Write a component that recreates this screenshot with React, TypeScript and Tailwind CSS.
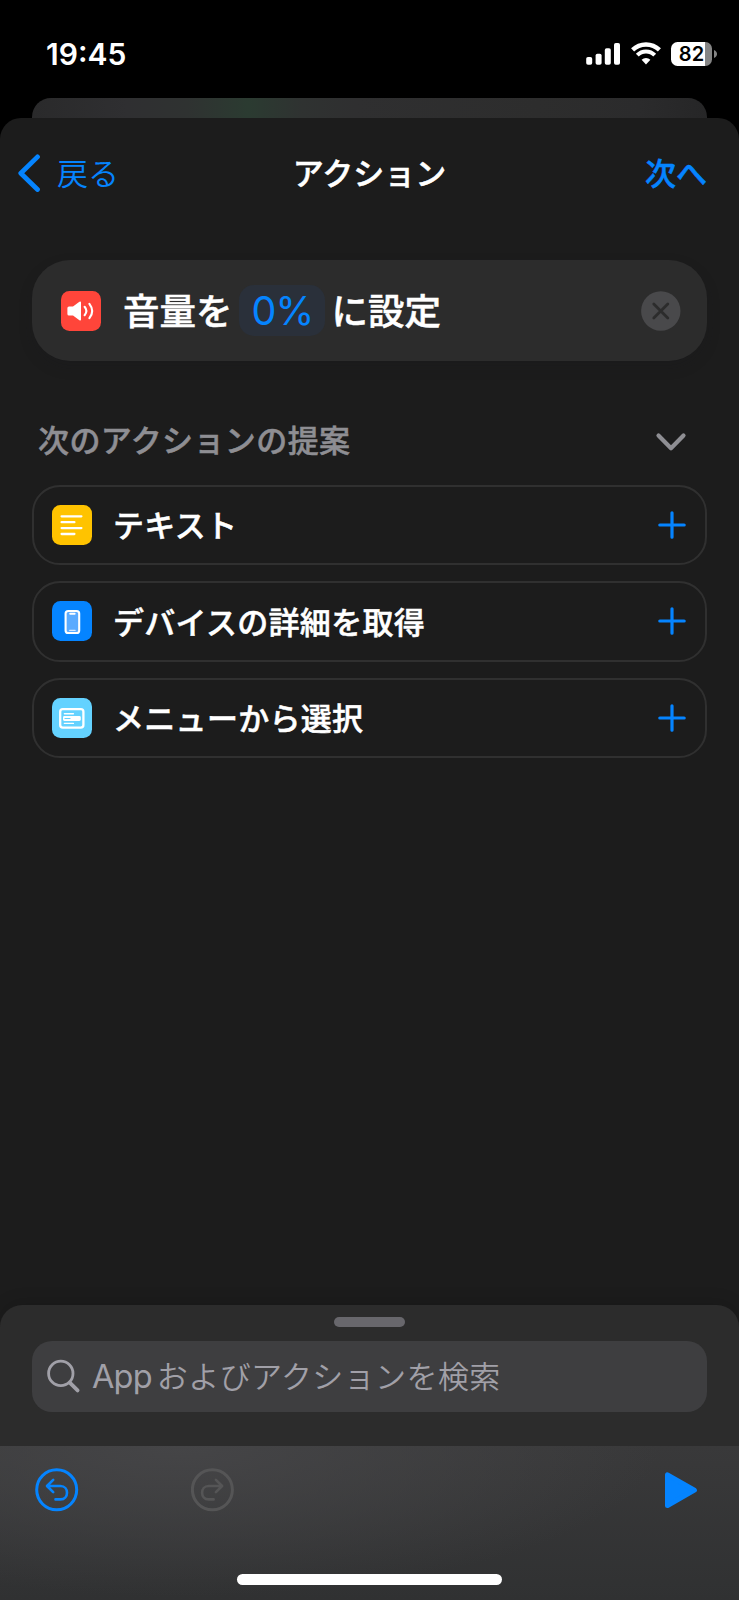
import type { ReactNode } from "react";

function StatusBar() {
  return (
    <div className="flex h-[98px] shrink-0 items-start justify-between pr-[22px] pl-[46px]">
      <time className="mt-[34px] text-[30px] leading-10 font-semibold text-white">19:45</time>
      <div className="mt-[42px] flex items-start">
        <svg className="mt-[1px]" width="34" height="22" viewBox="0 0 34 22" fill="#fff">
          <rect x="0.2" y="14" width="6" height="7.8" rx="1.8" />
          <rect x="9.6" y="10.8" width="6" height="11" rx="1.8" />
          <rect x="18.8" y="5.3" width="6" height="16.5" rx="1.8" />
          <rect x="28" y="0" width="6" height="21.8" rx="1.8" />
        </svg>
        <svg className="ml-[11px]" width="30" height="23" viewBox="0 0 30 23" fill="none" stroke="#fff">
          <path d="M1.6 7.9 A19.2 19.2 0 0 1 28.4 7.9" strokeWidth="4.4" />
          <path d="M6.3 13.2 A12 12 0 0 1 23.7 13.2" strokeWidth="4" />
          <path d="M15 22.4 L10.6 17.8 A6.3 6.3 0 0 1 19.4 17.8 Z" fill="#fff" stroke="none" />
        </svg>
        <div className="ml-[10px] flex h-6 w-[41px] items-center justify-center overflow-hidden rounded-[6.5px] bg-linear-to-r from-white from-[83.5%] to-[#858585] to-[83.5%] text-[20px] font-semibold text-black">
          <span className="leading-6">82</span>
        </div>
        <svg className="mt-2 ml-[2px]" width="3" height="8" viewBox="0 0 3 8" fill="#858585">
          <path d="M0 0 C4 1.5 4 6.5 0 8 Z" />
        </svg>
      </div>
    </div>
  );
}

function NavBar() {
  return (
    <header className="grid h-[110px] shrink-0 grid-cols-[1fr_auto_1fr] items-center px-[17px] text-[31px] leading-10">
      <button className="flex items-center text-[#0584ff]">
        <svg width="24" height="38" viewBox="0 0 24 38" fill="none" stroke="#0584ff" strokeWidth="4.8" strokeLinecap="round" strokeLinejoin="round">
          <path d="M20.5 2.9 L3.8 19.2 L20.5 35.5" />
        </svg>
        <span className="ml-[16px] pt-[1px] text-[31px] font-[350]">戻る</span>
      </button>
      <h1 className="pt-[1px] font-medium text-white [-webkit-text-stroke:0.5px]">アクション</h1>
      <button className="mr-[15px] justify-self-end pt-[1px] font-medium text-[#0584ff] [-webkit-text-stroke:0.5px]">次へ</button>
    </header>
  );
}

function VolumeCard() {
  return (
    <section className="mx-8 mt-[32px] flex h-[101px] shrink-0 items-center rounded-[38px] bg-[#2c2c2c] pr-[26px] pl-[29px] shadow-[0_6px_14px_rgba(24,24,32,0.2)]">
      <svg width="40" height="40" viewBox="0 0 40 40">
        <rect width="40" height="40" rx="8.5" fill="#ff453a" />
        <path d="M8 15.4 H12 L18.4 10.8 Q20 9.8 20 11.6 V28.4 Q20 30.2 18.4 29.2 L12 24.6 H8 Q6.4 24.6 6.4 23 V17 Q6.4 15.4 8 15.4 Z" fill="#fff" />
        <path d="M23.6 15.8 Q27.2 20 23.6 24.2 M28.4 12.8 Q34 20 28.4 27.2" fill="none" stroke="#fff" strokeWidth="2.1" strokeLinecap="round" />
      </svg>
      <p className="ml-[22px] flex items-center text-[36.5px] leading-[51px] font-medium text-white">
        <span className="pt-[3px] [-webkit-text-stroke:0.5px]">音量を</span>
        <span className="mr-[7px] ml-[6px] flex h-[51px] w-[86px] items-center justify-center rounded-[15px] bg-[#2a303a] pt-px pl-[2px] text-[39.5px] font-normal tracking-[-0.8px] text-[#0584ff]">0%</span>
        <span className="pt-[3px] [-webkit-text-stroke:0.5px]">に設定</span>
      </p>
      <button className="ml-auto" aria-label="削除">
        <svg width="40" height="40" viewBox="0 0 40 40">
          <circle cx="19.8" cy="20" r="19.7" fill="#49494b" />
          <path d="M12.8 13 L26.8 27 M26.8 13 L12.8 27" stroke="#2c2c2c" strokeWidth="2.8" strokeLinecap="round" />
        </svg>
      </button>
    </section>
  );
}

function TextIcon() {
  return (
    <svg width="40" height="40" viewBox="0 0 40 40">
      <rect width="40" height="40" rx="8.5" fill="#ffc300" />
      <path d="M9.6 11.3 H29.4 M9.6 17.2 H22.4 M9.6 23.1 H29.4 M9.6 29 H22.4" stroke="#fff" strokeWidth="2.3" strokeLinecap="round" />
    </svg>
  );
}

function DeviceIcon() {
  return (
    <svg width="40" height="40" viewBox="0 0 40 40">
      <rect width="40" height="40" rx="8.5" fill="#0584ff" />
      <rect x="13.6" y="10" width="13.6" height="22" rx="2.6" fill="#5babff" stroke="#fff" strokeWidth="2.1" />
      <path d="M18.2 12.7 H22.6" stroke="#fff" strokeWidth="2" strokeLinecap="round" />
      <path d="M17.6 29.3 H23.2" stroke="#d5eaff" strokeWidth="1.2" strokeLinecap="round" />
    </svg>
  );
}

function MenuIcon() {
  return (
    <svg width="40" height="40" viewBox="0 0 40 40">
      <rect width="40" height="40" rx="8.5" fill="#64d2ff" />
      <rect x="8.2" y="11.2" width="23.2" height="18.4" rx="2.6" fill="none" stroke="#fff" strokeWidth="2.3" />
      <path d="M12.4 15.7 H21.4 M12.4 25.4 H21.4" stroke="#fff" strokeWidth="1.4" strokeLinecap="round" />
      <rect x="11" y="18.1" width="17.8" height="4.8" rx="1.4" fill="#fff" />
      <path d="M13 20.5 H18" stroke="#64d2ff" strokeWidth="1.2" strokeLinecap="round" />
    </svg>
  );
}

function SuggestionRow({ icon, label }: { icon: ReactNode; label: string }) {
  return (
    <li className="flex h-[80.4px] items-center rounded-[28px] border-2 border-[#303030] pr-[18px] pl-[18px]">
      {icon}
      <span className="ml-[21px] pt-[3px] text-[31px] leading-10 font-medium tracking-[0.3px] text-white [-webkit-text-stroke:0.5px]">{label}</span>
      <button className="ml-auto" aria-label="追加">
        <svg width="30" height="30" viewBox="0 0 30 30" stroke="#0584ff" strokeWidth="3.2" strokeLinecap="round">
          <path d="M15 2.8 V27.2 M2.8 15 H27.2" />
        </svg>
      </button>
    </li>
  );
}

function Suggestions() {
  return (
    <section className="mx-8 mt-[60px]">
      <div className="flex h-10 items-center justify-between pr-[20px] pl-[6px]">
        <h2 className="text-[31px] leading-10 font-medium tracking-[0.4px] text-[#8e8e93] [-webkit-text-stroke:0.5px]">次のアクションの提案</h2>
        <svg className="mt-[2px]" width="32" height="20" viewBox="0 0 32 20" fill="none" stroke="#8e8e93" strokeWidth="4.2" strokeLinecap="round" strokeLinejoin="round">
          <path d="M3.5 3.5 L16 16.2 L28.5 3.5" />
        </svg>
      </div>
      <ul className="mt-[23.8px] flex flex-col gap-[16px]">
        <SuggestionRow icon={<TextIcon />} label="テキスト" />
        <SuggestionRow icon={<DeviceIcon />} label="デバイスの詳細を取得" />
        <SuggestionRow icon={<MenuIcon />} label="メニューから選択" />
      </ul>
    </section>
  );
}

function SearchPanel() {
  return (
    <section className="mt-auto flex h-[141px] shrink-0 flex-col items-center rounded-t-[22px] bg-[#2c2c2c] px-8 pt-3 shadow-[0_-4px_16px_rgba(0,0,0,0.12)]">
      <div className="h-[10px] w-[71px] rounded-full bg-[#68676c]" />
      <div className="mt-[13.5px] flex h-[71px] w-full items-center rounded-[20px] bg-[#3e3e40] pl-[14px] text-[#a1a0a8]">
        <svg width="36" height="36" viewBox="0 0 36 36" fill="none" stroke="#a1a0a8" strokeLinecap="round">
          <circle cx="14.8" cy="15.4" r="12.2" strokeWidth="2.8" />
          <path d="M24 24.8 L31.6 32.4" strokeWidth="3.8" />
        </svg>
        <span className="ml-[10px] pt-[2px] text-[32.5px] leading-10 tracking-[-0.8px]">App</span>
        <span className="ml-[5px] pt-[1px] text-[31px] leading-10 font-[350] tracking-[0.4px]">およびアクションを検索</span>
      </div>
    </section>
  );
}

function Toolbar() {
  return (
    <footer className="flex h-[154px] shrink-0 flex-col items-center bg-[radial-gradient(ellipse_480px_150px_at_180px_0px,#454547_0%,rgba(69,69,71,0)_100%),linear-gradient(to_bottom,#39393a_0%,#303132_100%)]">
      <div className="flex w-full items-start pt-[22px] pr-[41px] pl-[35px]">
        <button aria-label="取り消す">
          <svg width="44" height="44" viewBox="0 0 44 44" fill="none" stroke="#0584ff" strokeWidth="3" strokeLinecap="round" strokeLinejoin="round">
            <circle cx="21.7" cy="21.8" r="20" />
            <path d="M18.2 11.8 L12 18 L18.2 24.2 M12.4 18 H25.4 C34.2 18 34.2 31.4 25.4 31.4 H20.5" strokeWidth="2.6" />
          </svg>
        </button>
        <button className="ml-[112px]" aria-label="やり直す">
          <svg width="44" height="44" viewBox="0 0 44 44" fill="none" stroke="#555556" strokeWidth="3" strokeLinecap="round" strokeLinejoin="round">
            <circle cx="21.4" cy="21.8" r="20" />
            <path d="M24.9 11.8 L31.1 18 L24.9 24.2 M30.7 18 H17.7 C8.9 18 8.9 31.4 17.7 31.4 H22.6" strokeWidth="2.6" />
          </svg>
        </button>
        <button className="mt-1 ml-auto" aria-label="実行">
          <svg width="33" height="37" viewBox="0 0 33 37" fill="#0584ff" stroke="#0584ff" strokeWidth="5" strokeLinejoin="round">
            <path d="M2.5 2.8 V33.6 L29.4 18.2 Z" />
          </svg>
        </button>
      </div>
      <div className="mt-auto mb-[15px] h-[11px] w-[265px] rounded-full bg-white" />
    </footer>
  );
}

export default function App() {
  return (
    <main className="flex h-[1600px] w-[739px] flex-col overflow-hidden bg-black font-['Inter','Noto_Sans_CJK_JP',sans-serif]">
      <StatusBar />
      <div className="mx-8 -mb-6 h-11 shrink-0 rounded-t-[19px] bg-[linear-gradient(90deg,#2a2a2b_0%,#2f2f31_14%,#2f3231_23%,#2b3b31_32%,#2f3231_40%,#2f2f30_48%,#2d2d2d_75%,#2b2b2c_90%,#262627_100%)]" />
      <div className="relative flex min-h-0 flex-1 flex-col rounded-t-[21px] bg-[#1c1c1c]">
        <NavBar />
        <VolumeCard />
        <Suggestions />
        <SearchPanel />
        <Toolbar />
      </div>
    </main>
  );
}
